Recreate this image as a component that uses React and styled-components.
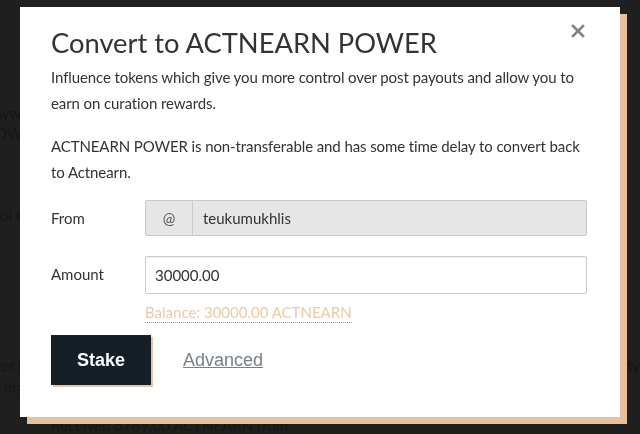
import React from 'react';
import styled, { createGlobalStyle } from 'styled-components';

const GlobalStyle = createGlobalStyle`
  html, body {
    margin: 0;
    padding: 0;
    background: #1f1f1f;
    overflow: hidden;
  }
  body {
    font-family: 'Lato', 'Open Sans', sans-serif;
  }
`;

// dimmed page behind the overlay
const Page = styled.div`
  width: 654px;
  height: 434px;
  margin-left: -14px;
  padding-top: 103px;
  box-sizing: border-box;
  color: #151515;
  font-size: 15px;
  line-height: 20px;
  overflow: hidden;
`;

const PageBlock = styled.div`
  margin-top: ${p => p.gap || 0}px;
  padding-left: ${p => p.indent || 0}px;
  display: flex;
  justify-content: space-between;
  white-space: nowrap;
`;

const Modal = styled.div`
  position: fixed;
  left: 20px;
  top: 7px;
  width: 600px;
  height: 410px;
  box-sizing: border-box;
  background: #fff;
  box-shadow: 7px 7px 0 #e6bf9c;
  padding: 18px 33px 0 31px;
  color: #333;
  display: flex;
  flex-direction: column;
`;

const Close = styled.button`
  position: absolute;
  top: 12px;
  right: 30px;
  border: 0;
  background: none;
  padding: 0;
  width: 24px;
  height: 24px;
  display: flex;
  align-items: center;
  justify-content: center;
  cursor: pointer;
`;

const Title = styled.h2`
  margin: 0 0 3px;
  font-size: 27.3px;
  font-weight: 400;
  line-height: 36px;
  color: #333;
`;

const Intro = styled.div`
  display: flex;
  flex-direction: column;
  gap: 17px;
`;

const Text = styled.p`
  margin: 0;
  font-size: 15px;
  line-height: 26px;
  letter-spacing: -0.1px;
`;

const Form = styled.div`
  display: grid;
  grid-template-columns: 94px 1fr;
  row-gap: 20px;
  align-items: start;
  margin-top: 15px;
`;

const Label = styled.label`
  font-size: 15px;
  line-height: 36px;
`;

const Group = styled.div`
  display: flex;
  height: 36px;
  border: 1px solid #cacaca;
  border-radius: 2px;
  background: #e6e6e6;
  box-sizing: border-box;
`;

const Addon = styled.span`
  width: 46px;
  display: flex;
  align-items: center;
  justify-content: center;
  border-right: 1px solid #cacaca;
  font-size: 15px;
  color: #555;
`;

const Input = styled.input`
  flex: 1;
  width: 100%;
  box-sizing: border-box;
  border: ${p => (p.bare ? '0' : '1px solid #cacaca')};
  border-radius: 2px;
  background: ${p => (p.bare ? 'transparent' : '#fff')};
  height: ${p => (p.bare ? 34 : 38)}px;
  padding: 0 ${p => (p.bare ? 10 : 9)}px;
  font-family: 'Lato', 'Open Sans', sans-serif;
  font-size: 15px;
  color: #333;
  box-shadow: ${p => (p.bare ? 'none' : 'inset 0 1px 2px rgba(0,0,0,0.06)')};
  outline: none;
`;

const Balance = styled.div`
  display: inline-block;
  margin-top: 8px;
  font-size: 15px;
  line-height: 20px;
  color: #f0c9a5;
  border-bottom: 1px dotted #999;
`;

const Actions = styled.div`
  display: flex;
  align-items: center;
  gap: 32px;
  margin-top: 12px;
`;

const Stake = styled.button`
  width: 100px;
  height: 50px;
  border: 0;
  background: #171f26;
  color: #fff;
  font-family: 'Liberation Sans', Arial, sans-serif;
  font-weight: 700;
  font-size: 18px;
  box-shadow: 2px 2px 0 #ecc39e;
  cursor: pointer;
`;

const Advanced = styled.a`
  font-family: 'Liberation Sans', Arial, sans-serif;
  font-size: 18px;
  color: #788187;
  text-decoration: underline;
  cursor: pointer;
`;

const XIcon = () => (
  <svg width="14" height="14" viewBox="0 0 14 14">
    <path d="M2 2 L12 12 M12 2 L2 12" stroke="#7a868e" strokeWidth="2.6" strokeLinecap="square" />
  </svg>
);

export default function App() {
  return (
    <>
      <GlobalStyle />
      <Page>
        <PageBlock>anywhere</PageBlock>
        <PageBlock>POWER</PageBlock>
        <PageBlock gap={62}>tool over</PageBlock>
        <PageBlock gap={130}><span>ever more</span><span>quality</span></PageBlock>
        <PageBlock gap={2}>to make</PageBlock>
        <PageBlock gap={18} indent={65}>Received 6789.00 ACTNEARN from</PageBlock>
      </Page>
      <Modal>
        <Close aria-label="close"><XIcon /></Close>
        <Title>Convert to ACTNEARN POWER</Title>
        <Intro>
          <Text>Influence tokens which give you more control over post payouts and allow you to earn on curation rewards.</Text>
          <Text>ACTNEARN POWER is non-transferable and has some time delay to convert back to Actnearn.</Text>
        </Intro>
        <Form>
          <Label>From</Label>
          <Group>
            <Addon>@</Addon>
            <Input bare disabled value="teukumukhlis" readOnly />
          </Group>
          <Label>Amount</Label>
          <div>
            <Input defaultValue="30000.00" />
            <Balance>Balance: 30000.00 ACTNEARN</Balance>
          </div>
        </Form>
        <Actions>
          <Stake>Stake</Stake>
          <Advanced>Advanced</Advanced>
        </Actions>
      </Modal>
    </>
  );
}
